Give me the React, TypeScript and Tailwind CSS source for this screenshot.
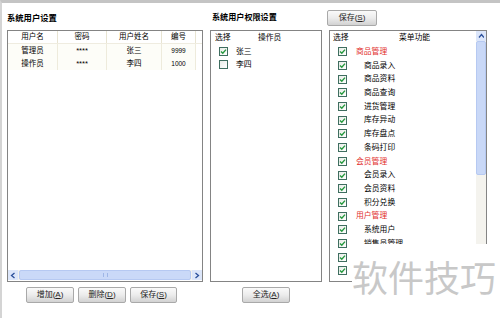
const users = [
  { account: "管理员", pwd: "****", name: "张三", no: "9999" },
  { account: "操作员", pwd: "****", name: "李四", no: "1000" },
]

const operators = [
  { name: "张三", checked: true },
  { name: "李四", checked: false },
]

// the last two rows sit under the watermark, their text isn't visible
const menus = [
  { label: "商品管理", group: true },
  { label: "商品录入" },
  { label: "商品资料" },
  { label: "商品查询" },
  { label: "进货管理" },
  { label: "库存异动" },
  { label: "库存盘点" },
  { label: "条码打印" },
  { label: "会员管理", group: true },
  { label: "会员录入" },
  { label: "会员资料" },
  { label: "积分兑换" },
  { label: "用户管理", group: true },
  { label: "系统用户" },
  { label: "销售员管理" },
  { label: "" },
  { label: "" },
]

function CheckBox({ checked }: { checked: boolean }) {
  return (
    <span className="flex h-[9px] w-[9px] shrink-0 items-center justify-center border border-[#3f6e60] bg-linear-to-br from-[#e8ece8] to-white">
      {checked ? (
        <svg width="7" height="7" viewBox="0 0 7 7">
          <path d="M1 3.4 L2.8 5.2 L6 1.6" fill="none" stroke="#22983c" strokeWidth="1.4" />
        </svg>
      ) : null}
    </span>
  )
}

function Btn({ text, hot, className = "" }: { text: string; hot: string; className?: string }) {
  return (
    <button
      type="button"
      className={`flex h-[16px] items-center justify-center rounded-[2px] border border-[#a9a9a9] bg-linear-to-b from-[#fafafa] via-[#ececec] to-[#d2d2d2] text-[8px] leading-none text-[#222] ${className}`}
    >
      {text}(<span className="underline">{hot}</span>)
    </button>
  )
}

function Arrow({ dir }: { dir: "left" | "right" | "up" }) {
  const d = dir === "left" ? "M4.5 1 L1.5 3.5 L4.5 6" : dir === "right" ? "M1.5 1 L4.5 3.5 L1.5 6" : "M1 4.5 L3.5 1.5 L6 4.5"
  return (
    <svg width="6" height="7" viewBox="0 0 6 7">
      <path d={d} fill="none" stroke="#2a4f9a" strokeWidth="1.3" />
    </svg>
  )
}

export default function App() {
  return (
    <div className="relative h-[318px] w-[500px] overflow-hidden border-t-[3px] border-l-[2px] border-t-[#c4c4c4] border-l-[#d4d4d4] bg-white font-['Liberation_Sans','Noto_Sans_CJK_SC',sans-serif] text-black">
      <div className="flex pl-[5px]">
        {/* 系统用户设置 */}
        <div className="flex w-[196px] flex-col">
          <div className="flex h-[27px] items-center pt-[3px] text-[8.3px] font-bold">系统用户设置</div>
          <div className="flex h-[252px] flex-col border border-[#848484]">
            <div className="flex h-[13px] border-b border-[#efece0] text-[7.5px]">
              <span className="flex w-[50px] items-center justify-center border-r border-[#e8e4d2]">用户名</span>
              <span className="flex w-[49px] items-center justify-center border-r border-[#e8e4d2]">密码</span>
              <span className="flex w-[55px] items-center justify-center border-r border-[#e8e4d2]">用户姓名</span>
              <span className="flex w-[34px] items-center justify-center border-r border-[#e8e4d2]">编号</span>
            </div>
            {users.map((u) => (
              <div key={u.no} className="flex h-[13px] text-[7.5px]">
                <span className="flex w-[50px] items-center justify-center border-r border-[#eeebdc] bg-[#fdfdf8]">{u.account}</span>
                <span className="flex w-[49px] items-center justify-center border-r border-[#eeebdc] bg-[#fdfdf8]">{u.pwd}</span>
                <span className="flex w-[55px] items-center justify-center border-r border-[#eeebdc] bg-[#fdfdf8]">{u.name}</span>
                <span className="flex w-[34px] items-center justify-center border-r border-[#eeebdc] bg-[#fdfdf8] text-[6.5px]">{u.no}</span>
              </div>
            ))}
            <div className="flex-1" />
            <div className="mb-[1px] flex h-[10px] items-stretch bg-[#f3f2ec]">
              <span className="flex w-[10px] items-center justify-center bg-[#dce6fa]">
                <Arrow dir="left" />
              </span>
              <span className="mx-[1px] flex flex-1 items-center justify-center rounded-[2px] border border-[#b6c9f2] bg-[#cad9f8]">
                <span className="h-[4px] w-[5px] border-x border-[#9fb6e6]" />
              </span>
              <span className="flex w-[10px] items-center justify-center bg-[#dce6fa]">
                <Arrow dir="right" />
              </span>
            </div>
          </div>
          <div className="mt-[5px] flex gap-[4px] pl-[19px]">
            <Btn text="增加" hot="A" className="w-[48px]" />
            <Btn text="删除" hot="D" className="w-[48px]" />
            <Btn text="保存" hot="S" className="w-[47px]" />
          </div>
        </div>

        {/* 系统用户权限设置 */}
        <div className="ml-[7px] flex w-[112px] flex-col">
          <div className="flex h-[27px] items-center pt-[3px] pl-[2px] text-[8.1px] font-bold">系统用户权限设置</div>
          <div className="flex h-[252px] flex-col border border-[#848484] text-[7.8px]">
            <div className="flex h-[14px] items-center">
              <span className="w-[47px] pl-[4px]">选择</span>
              <span>操作员</span>
            </div>
            {operators.map((o) => (
              <div key={o.name} className="flex h-[13px] items-center pl-[8px]">
                <CheckBox checked={o.checked} />
                <span className="ml-[8px]">{o.name}</span>
              </div>
            ))}
          </div>
          <div className="mt-[5px] flex justify-center">
            <Btn text="全选" hot="A" className="w-[48px]" />
          </div>
        </div>

        {/* 菜单功能 */}
        <div className="ml-[7px] flex w-[158px] flex-col">
          <div className="flex h-[27px] items-start pt-[7px]">
            <Btn text="保存" hot="S" className="-ml-[2px] w-[50px]" />
          </div>
          <div className="flex h-[252px] border border-[#848484] text-[7.8px]">
            <div className="flex flex-1 flex-col">
              <div className="flex h-[14px] items-center">
                <span className="w-[23px] pl-[3px]">选择</span>
                <span className="flex-1 text-center">菜单功能</span>
              </div>
              {menus.map((m, i) => (
                <div key={i} className="flex h-[13.7px] shrink-0 items-center pl-[8px]">
                  <CheckBox checked />
                  {m.label ? (
                    <span className={m.group ? "ml-[9px] text-[#e2302e]" : "ml-[17px]"}>{m.label}</span>
                  ) : null}
                </div>
              ))}
            </div>
            <div className="flex w-[10px] flex-col bg-[#f4f3ee]">
              <span className="flex h-[10px] items-center justify-center bg-[#dce6fa]">
                <Arrow dir="up" />
              </span>
              <span className="h-[134px] rounded-[2px] border border-[#b6c9f2] bg-[#c9d8f7]" />
            </div>
          </div>
        </div>
      </div>

      {/* watermark */}
      <div className="absolute top-[241px] right-0 bottom-0 left-[350px] bg-white pt-[18px]">
        <span className="block text-[36px] leading-[36px] text-[#c8c8c8]">软件技巧</span>
      </div>
    </div>
  )
}
